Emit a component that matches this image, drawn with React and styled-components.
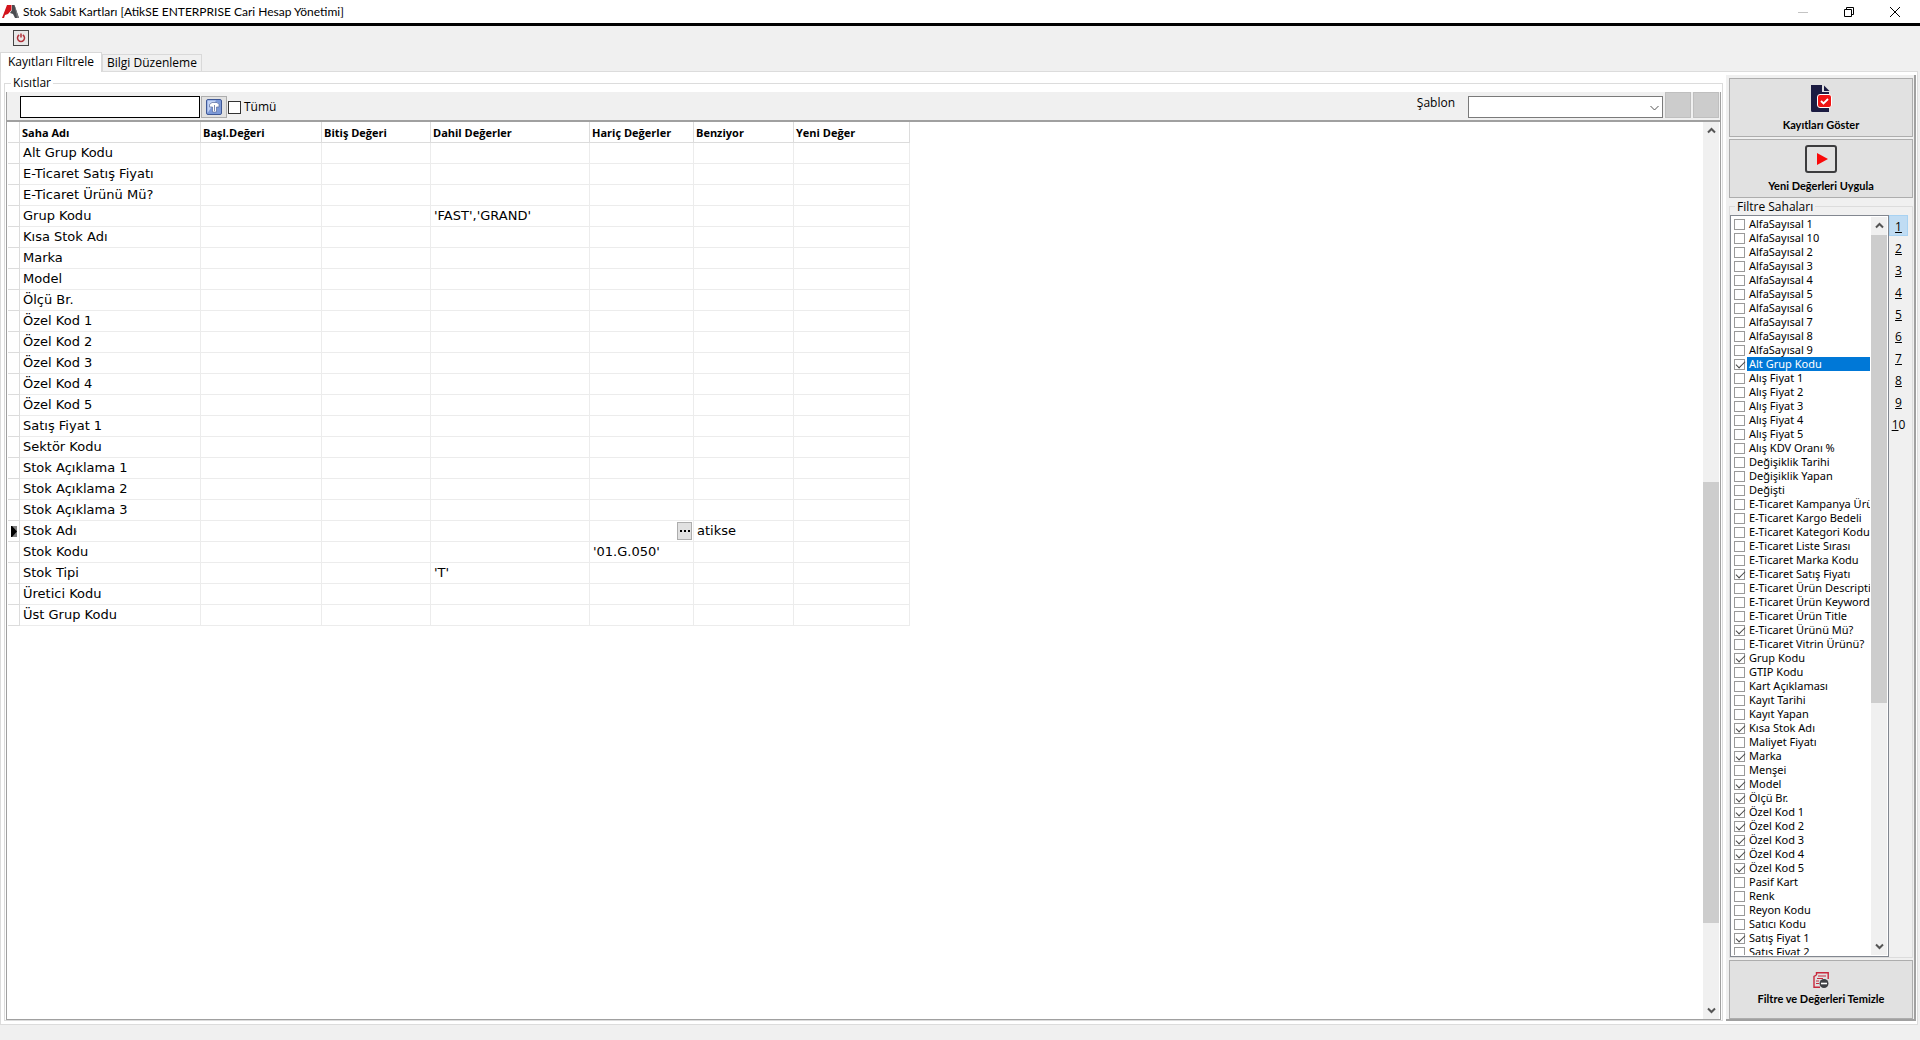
import React from 'react';
import styled, { createGlobalStyle } from 'styled-components'

//Data
const columns = [
	{ key: 'name', label: 'Saha Adı', width: 181 },
	{ key: 'start', label: 'Başl.Değeri', width: 121 },
	{ key: 'end', label: 'Bitiş Değeri', width: 109 },
	{ key: 'include', label: 'Dahil Değerler', width: 159 },
	{ key: 'exclude', label: 'Hariç Değerler', width: 104 },
	{ key: 'like', label: 'Benziyor', width: 100 },
	{ key: 'next', label: 'Yeni Değer', width: 116 }
];

const rows = [
	{ name: 'Alt Grup Kodu' },
	{ name: 'E-Ticaret Satış Fiyatı' },
	{ name: 'E-Ticaret Ürünü Mü?' },
	{ name: 'Grup Kodu', include: "'FAST','GRAND'" },
	{ name: 'Kısa Stok Adı' },
	{ name: 'Marka' },
	{ name: 'Model' },
	{ name: 'Ölçü Br.' },
	{ name: 'Özel Kod 1' },
	{ name: 'Özel Kod 2' },
	{ name: 'Özel Kod 3' },
	{ name: 'Özel Kod 4' },
	{ name: 'Özel Kod 5' },
	{ name: 'Satış Fiyat 1' },
	{ name: 'Sektör Kodu' },
	{ name: 'Stok Açıklama 1' },
	{ name: 'Stok Açıklama 2' },
	{ name: 'Stok Açıklama 3' },
	{ name: 'Stok Adı', like: 'atikse', current: true },
	{ name: 'Stok Kodu', exclude: "'01.G.050'" },
	{ name: 'Stok Tipi', include: "'T'" },
	{ name: 'Üretici Kodu' },
	{ name: 'Üst Grup Kodu' }
];

const fields = [
	'AlfaSayısal 1', 'AlfaSayısal 10', 'AlfaSayısal 2', 'AlfaSayısal 3', 'AlfaSayısal 4',
	'AlfaSayısal 5', 'AlfaSayısal 6', 'AlfaSayısal 7', 'AlfaSayısal 8', 'AlfaSayısal 9',
	'Alt Grup Kodu', 'Alış Fiyat 1', 'Alış Fiyat 2', 'Alış Fiyat 3', 'Alış Fiyat 4',
	'Alış Fiyat 5', 'Alış KDV Oranı %', 'Değişiklik Tarihi', 'Değişiklik Yapan', 'Değişti',
	'E-Ticaret Kampanya Ürünü', 'E-Ticaret Kargo Bedeli', 'E-Ticaret Kategori Kodu',
	'E-Ticaret Liste Sırası', 'E-Ticaret Marka Kodu', 'E-Ticaret Satış Fiyatı',
	'E-Ticaret Ürün Description', 'E-Ticaret Ürün Keywords', 'E-Ticaret Ürün Title',
	'E-Ticaret Ürünü Mü?', 'E-Ticaret Vitrin Ürünü?', 'Grup Kodu', 'GTIP Kodu',
	'Kart Açıklaması', 'Kayıt Tarihi', 'Kayıt Yapan', 'Kısa Stok Adı', 'Maliyet Fiyatı',
	'Marka', 'Menşei', 'Model', 'Ölçü Br.', 'Özel Kod 1', 'Özel Kod 2', 'Özel Kod 3',
	'Özel Kod 4', 'Özel Kod 5', 'Pasif Kart', 'Renk', 'Reyon Kodu', 'Satıcı Kodu',
	'Satış Fiyat 1', 'Satış Fiyat 2'
];

//a field is ticked when the grid has a row for it
const used = rows.map(row => row.name);
const pages = [1, 2, 3, 4, 5, 6, 7, 8, 9, 10];

//Icons
const Logo = () => (
	<svg width="17" height="16" viewBox="0 0 17 16" aria-hidden="true">
		<path d="M5 1h4.500v5L6 10l-3 1-1 3H0z" fill="#d3141c" />
		<path d="M10 1h2.500L17 14h-4l-2-4-3-1 2-3z" fill="#4a4c50" />
		<path d="M12.500 1L17 14h-2z" fill="#77797c" />
	</svg>
);

const MinimizeIcon = () => (
	<svg width="16" height="12" viewBox="0 0 16 12"><path d="M3 6.500h10" stroke="#c4c4c4" /></svg>
);

const RestoreIcon = () => (
	<svg width="12" height="12" viewBox="0 0 12 12" fill="none" stroke="#000">
		<path d="M1.500 3.500h7v7h-7zM3.500 3.500v-2h7v7h-2" />
	</svg>
);

const CloseIcon = () => (
	<svg width="12" height="12" viewBox="0 0 12 12"><path d="M1 1l10 10M11 1L1 11" stroke="#000" /></svg>
);

const PowerIcon = () => (
	<svg width="10" height="10" viewBox="0 0 10 10" fill="none" stroke="#b03038" strokeWidth="1.500">
		<path d="M3.200 2a3.500 3.500 0 1 0 3.600 0M5 .5v4" />
	</svg>
);

const UploadIcon = () => (
	<svg width="16" height="16" viewBox="0 0 16 16">
		<rect x=".5" y=".5" width="15" height="15" rx="1.500" fill="#7d9ad8" stroke="#3f5896" />
		<path d="M1.500 14V1.500H10z" fill="#c3d3f4" />
		<path d="M3.500 8V5.500L6 3.500h5L13 5.500V8h-2.500v5h-4V8z" fill="#fff" stroke="#5a6c9c" strokeWidth=".7" />
		<path d="M8.500 6v6" stroke="#5a6c9c" strokeWidth=".8" />
	</svg>
);

const MarkerIcon = () => (
	<svg width="6" height="11" viewBox="0 0 6 11">
		<path d="M0 0h6v11H0z" fill="#808080" />
		<path d="M0 0h1l5 5.500L1 11H0z" />
	</svg>
);

const ArrowIcon = ({ down }) => (
	<svg width="9" height="7" viewBox="0 0 9 7" fill="none" stroke="#555" strokeWidth="2">
		<path d={down ? 'M1 1.500l3.500 3.500L8 1.500' : 'M1 5.500L4.500 2 8 5.500'} />
	</svg>
);

const DropIcon = () => (
	<svg width="9" height="6" viewBox="0 0 9 6" fill="none" stroke="#555"><path d="M.5 1l4 4 4-4" /></svg>
);

const DocumentIcon = () => (
	<svg width="22" height="28" viewBox="0 0 22 28">
		<path d="M1 1h11v7h7v20H2.500Q1 28 1 26.500z" fill="#1c1c42" />
		<path d="M14 1.500V7h5.500z" fill="#1c1c42" />
		<rect x="7.500" y="10.500" width="14" height="13" rx="2.500" fill="#f01414" stroke="#fff" />
		<path d="M11 17l2.500 2.500L18 15" fill="none" stroke="#fff" strokeWidth="1.800" />
	</svg>
);

const PlayIcon = () => (
	<svg width="32" height="28" viewBox="0 0 32 28">
		<rect x="1" y="1" width="30" height="26" rx="2" fill="none" stroke="#3c3c3e" strokeWidth="2" />
		<path d="M12 8l11 6-11 6z" fill="#fa0a0a" />
	</svg>
);

const ClearIcon = () => (
	<svg width="16" height="16" viewBox="0 0 16 16" fill="none" stroke="#c8283c">
		<path d="M3.500 3V.800h11.700V7M3.500 3L1 4.500v10.700h6" strokeWidth="1.400" />
		<path d="M5 4h8M4 6.500h6M3 9h3M3 11.500h3" />
		<circle cx="11" cy="11.500" r="4.500" fill="#3e4044" stroke="none" />
		<path d="M8 11.500h6" stroke="#fff" strokeWidth="1.600" />
	</svg>
);

const ScrollBar = ({ before, size, after }) => (
	<Bar>
		<BarButton type="button" aria-label="Yukarı"><ArrowIcon /></BarButton>
		<Gap $grow={before} />
		<Thumb $grow={size} />
		<Gap $grow={after} />
		<BarButton type="button" aria-label="Aşağı"><ArrowIcon down /></BarButton>
	</Bar>
);

class App extends React.Component {

	//initial state
	constructor(props) {
		super(props)
		this.state = {
			page: 1,
			selected: 'Alt Grup Kodu'
		}
	}

	//Methods
	renderCell(row, column) {
		if (row.current && column.key === 'exclude') {
			return <MoreButton type="button" aria-label="Değer seç"><Dot /><Dot /><Dot /></MoreButton>;
		}
		return row[column.key];
	}

	render() {
		const { page, selected } = this.state;

		//Template
		return (
			<Window>
				<GlobalStyle />
				<TitleBar>
					<Logo />
					<Title>Stok Sabit Kartları [AtikSE ENTERPRISE Cari Hesap Yönetimi]</Title>
					<WindowButton type="button" aria-label="Simge durumuna küçült"><MinimizeIcon /></WindowButton>
					<WindowButton type="button" aria-label="Önceki boyut"><RestoreIcon /></WindowButton>
					<WindowButton type="button" aria-label="Kapat"><CloseIcon /></WindowButton>
				</TitleBar>
				<ToolBar>
					<PowerButton type="button" aria-label="Çıkış"><PowerIcon /></PowerButton>
				</ToolBar>
				<Tabs role="tablist">
					<Tab type="button" role="tab" aria-selected="true" $active>Kayıtları Filtrele</Tab>
					<Tab type="button" role="tab" aria-selected="false">Bilgi Düzenleme</Tab>
				</Tabs>
				<Pane>
					<Group>
						<Legend>Kısıtlar</Legend>
						<Frame>
							<FilterBar>
								<SearchInput type="text" aria-label="Ara" />
								<UploadButton type="button" aria-label="Aktar"><UploadIcon /></UploadButton>
								<AllLabel><AllCheck type="checkbox" />Tümü</AllLabel>
								<TemplateLabel htmlFor="template">Şablon</TemplateLabel>
								<SelectCon>
									<TemplateSelect id="template"><option></option></TemplateSelect>
									<SelectArrow><DropIcon /></SelectArrow>
								</SelectCon>
								<GreyButton type="button" aria-label="Şablon kaydet" />
								<GreyButton type="button" aria-label="Şablon sil" />
							</FilterBar>
							<GridCon>
								<GridScroll>
									<Grid>
										<colgroup>
											<Col $width={12} />
											{columns.map(column => <Col key={column.key} $width={column.width} />)}
										</colgroup>
										<thead>
											<tr>
												<HeadCell />
												{columns.map(column => <HeadCell key={column.key}>{column.label}</HeadCell>)}
											</tr>
										</thead>
										<tbody>
											{rows.map(row => (
												<tr key={row.name}>
													<MarkCell>{row.current && <MarkerIcon />}</MarkCell>
													{columns.map(column => (
														<Cell key={column.key}>{this.renderCell(row, column)}</Cell>
													))}
												</tr>
											))}
										</tbody>
									</Grid>
								</GridScroll>
								<ScrollBar before={343} size={440} after={79} />
							</GridCon>
						</Frame>
					</Group>
					<Side>
						<BigButton type="button"><DocumentIcon />Kayıtları Göster</BigButton>
						<BigButton type="button"><PlayIcon />Yeni Değerleri Uygula</BigButton>
						<FieldGroup>
							<FieldLegend>Filtre Sahaları</FieldLegend>
							<FieldCon>
								<ListBox>
									<List>
										{fields.map(field => (
											<Item key={field}>
												<ItemCheck
													type="checkbox"
													defaultChecked={used.includes(field)}
													onFocus={() => this.setState({ selected: field })}
												/>
												<ItemText $selected={field === selected}>{field}</ItemText>
											</Item>
										))}
									</List>
									<ScrollBar before={1} size={469} after={236} />
								</ListBox>
								<Pages>
									{pages.map(number => (
										<PageButton
											key={number}
											type="button"
											$active={number === page}
											onClick={() => this.setState({ page: number })}
										>
											<u>{String(number)[0]}</u>{String(number).slice(1)}
										</PageButton>
									))}
								</Pages>
							</FieldCon>
						</FieldGroup>
						<BigButton type="button" $tight><ClearIcon />Filtre ve Değerleri Temizle</BigButton>
					</Side>
				</Pane>
			</Window>
		);
	}

}

//Style
const GlobalStyle = createGlobalStyle`
	* { box-sizing: border-box; }
	body {
		margin: 0;
		background: #f0f0f0;
		color: #000;
		font: 12px/16px "Open Sans", sans-serif;
	}
	button, input, select {
		font: inherit;
		color: inherit;
		margin: 0;
		padding: 0;
		border-radius: 0;
	}
	svg { display: block; flex: none; }
`;
const Window = styled.div `
	display: flex;
	flex-direction: column;
	height: 100vh;
	padding-bottom: 15px;
`;
const TitleBar = styled.header `
	display: flex;
	align-items: center;
	height: 26px;
	padding: 0 2px;
	background: white;
	border-bottom: 3px solid #000;
`;
const Title = styled.h1 `
	flex: 1;
	margin: 0 0 0 4px;
	font: 12px/16px Lato, sans-serif;
`;
const WindowButton = styled.button `
	display: grid;
	place-items: center;
	width: 46px;
	height: 20px;
	border: 0;
	background: none;
`;
const ToolBar = styled.div `
	height: 26px;
	padding: 4px 13px;
`;
const PowerButton = styled.button `
	display: grid;
	place-items: center;
	width: 16px;
	height: 16px;
	border: 1px solid #444;
	background: #e8e8e8;
`;
const Tabs = styled.div `
	display: flex;
	align-items: flex-end;
	height: 19px;
`;
const Tab = styled.button `
	height: ${props => props.$active ? 20 : 17}px;
	margin-bottom: ${props => props.$active ? -1 : 0}px;
	padding: 0 ${props => props.$active ? '7px 2px' : '4px'};
	border: 1px solid #d9d9d9;
	border-bottom: 0;
	background: ${props => props.$active ? 'white' : '#f0f0f0'};
	line-height: 16px;
	z-index: 1;
`;
const Pane = styled.main `
	flex: 1;
	min-height: 0;
	display: flex;
	gap: 3px;
	margin-right: 2px;
	padding: 3px 1px 3px 3px;
	border: 1px solid #dcdcdc;
	background: white;
`;
const Group = styled.fieldset `
	flex: 1;
	min-width: 0;
	display: flex;
	margin: 0;
	padding: 1px 1px 0;
	border: 1px solid #dcdcdc;
`;
const Legend = styled.legend `
	margin-left: 5px;
	padding: 0 2px;
	line-height: 16px;
`;
const Frame = styled.div `
	flex: 1;
	min-width: 0;
	display: flex;
	flex-direction: column;
	border: 1px solid #a0a0a0;
	border-top: 0;
`;
const FilterBar = styled.div `
	display: flex;
	align-items: flex-end;
	height: 30px;
	padding: 0 1px 2px 13px;
	background: #f0f0f0;
	border-bottom: 2px solid #a0a0a0;
`;
const SearchInput = styled.input `
	width: 180px;
	height: 22px;
	padding: 0 4px;
	border: 1px solid #000;
	background: white;
`;
const UploadButton = styled.button `
	display: grid;
	place-items: center;
	width: 26px;
	height: 22px;
	margin-left: 1px;
	border: 1px solid #adadad;
	background: #e1e1e1;
`;
const AllLabel = styled.label `
	flex: 1;
	display: flex;
	align-items: center;
	gap: 3px;
	height: 22px;
	margin-left: 1px;
`;
const AllCheck = styled.input `
	appearance: none;
	width: 13px;
	height: 13px;
	border: 1px solid #333;
	background: white;
`;
const TemplateLabel = styled.label `
	margin: 0 13px 7px 0;
`;
const SelectCon = styled.div `
	position: relative;
	width: 195px;
`;
const TemplateSelect = styled.select `
	display: block;
	appearance: none;
	width: 100%;
	height: 22px;
	padding: 0 20px 0 4px;
	border: 1px solid #7a7a7a;
	background: white;
`;
const SelectArrow = styled.span `
	position: absolute;
	right: 4px;
	top: 9px;
	pointer-events: none;
`;
const GreyButton = styled.button `
	width: 26px;
	height: 26px;
	margin-left: 2px;
	border: 1px solid #bfbfbf;
	background: #ccc;
`;
const GridCon = styled.div `
	flex: 1;
	min-height: 0;
	display: flex;
	padding: 0 1px;
	background: white;
`;
const GridScroll = styled.div `
	flex: 1;
	min-width: 0;
	overflow: hidden;
`;
const Grid = styled.table `
	table-layout: fixed;
	width: 902px;
	border-collapse: separate;
	border-spacing: 0;
	font: 13px/16px "DejaVu Sans", Verdana, sans-serif;
`;
const Col = styled.col `
	width: ${props => props.$width}px;
`;
const HeadCell = styled.th `
	height: 21px;
	padding: 1px 2px 0;
	border-right: 1px solid #dcdcdc;
	border-bottom: 1px solid #dcdcdc;
	font: bold 11px/16px "Open Sans", sans-serif;
	text-align: left;
	white-space: nowrap;
`;
const Cell = styled.td `
	height: 21px;
	padding: 0 1px 0 3px;
	border-right: 1px solid #ececec;
	border-bottom: 1px solid #ececec;
	white-space: nowrap;
`;
const MarkCell = styled(Cell) `
	border-color: #dcdcdc;
`;
const MoreButton = styled.button `
	display: flex;
	align-items: center;
	justify-content: center;
	gap: 2px;
	width: 15px;
	height: 18px;
	margin-left: auto;
	border: 1px solid #adadad;
	background: #e1e1e1;
`;
const Dot = styled.i `
	width: 2px;
	height: 2px;
	background: #000;
`;
const Bar = styled.div `
	flex: none;
	display: flex;
	flex-direction: column;
	width: 16px;
	background: #f0f0f0;
`;
const BarButton = styled.button `
	display: grid;
	place-items: center;
	height: 17px;
	border: 0;
	background: none;
`;
const Gap = styled.div `
	flex: ${props => props.$grow} 0 0;
`;
const Thumb = styled(Gap) `
	background: #cdcdcd;
`;
const Side = styled.aside `
	display: flex;
	flex-direction: column;
	gap: 2px;
	width: 190px;
	padding: 3px 1px 0 3px;
	background: #f0f0f0;
	border-right: 2px solid #a0a0a0;
	border-bottom: 2px solid #a0a0a0;
`;
const BigButton = styled.button `
	flex: none;
	display: flex;
	flex-direction: column;
	align-items: center;
	justify-content: center;
	gap: ${props => props.$tight ? 3 : 5}px;
	height: 59px;
	padding-top: ${props => props.$tight ? 0 : 2}px;
	border: 1px solid #adadad;
	background: #e1e1e1;
	font: bold 11px/16px Lato, sans-serif;
`;
const FieldGroup = styled.fieldset `
	flex: 1;
	min-width: 0;
	min-height: 0;
	display: flex;
	margin: 0;
	padding: 2px 0 0;
	border: 1px solid #dcdcdc;
`;
const FieldLegend = styled.legend `
	margin-left: 5px;
	padding: 0 2px;
	line-height: 13px;
`;
const FieldCon = styled.div `
	flex: 1;
	min-width: 0;
	min-height: 0;
	display: flex;
`;
const ListBox = styled.div `
	flex: 1;
	min-width: 0;
	display: flex;
	padding: 1px;
	border: 1px solid #828790;
	background: white;
`;
const List = styled.div `
	flex: 1;
	min-width: 0;
	overflow: hidden;
`;
const Item = styled.label `
	display: flex;
	align-items: center;
	gap: 2px;
	height: 14px;
	padding: 0 1px 0 2px;
	font: 11px/14px "Noto Sans", sans-serif;
	white-space: nowrap;
`;
const ItemCheck = styled.input `
	flex: none;
	appearance: none;
	width: 11px;
	height: 11px;
	border: 1px solid #999;
	background: white;

	&:checked::after {
		content: '';
		display: block;
		width: 8px;
		height: 4px;
		margin: 1px 0 0 1px;
		border: solid #444;
		border-width: 0 0 1px 1px;
		transform: rotate(-45deg);
	}
`;
const ItemText = styled.span `
	flex: 1;
	min-width: 0;
	overflow: hidden;
	padding-left: 2px;
	color: ${props => props.$selected ? 'white' : '#000'};
	background: ${props => props.$selected ? '#0078d7' : 'none'};
`;
const Pages = styled.nav `
	display: flex;
	flex-direction: column;
	gap: 1px;
	width: 23px;
	padding-right: 4px;
`;
const PageButton = styled.button `
	height: 21px;
	padding-top: 2px;
	border: 1px solid ${props => props.$active ? '#a8d2f2' : 'transparent'};
	background: ${props => props.$active ? '#c0dcf3' : 'none'};
`;

export default App
